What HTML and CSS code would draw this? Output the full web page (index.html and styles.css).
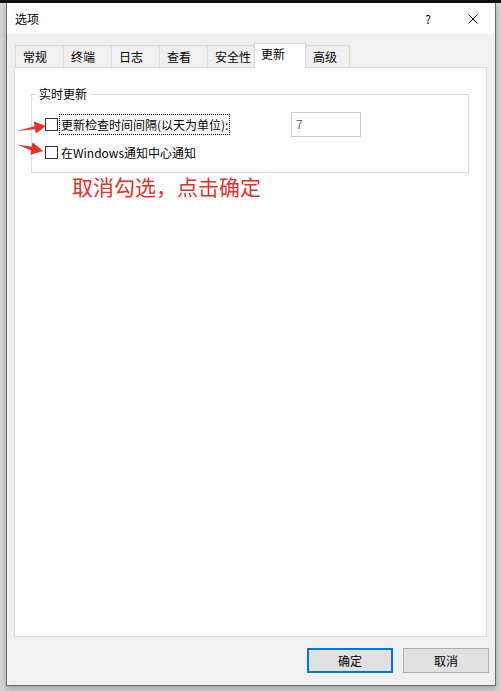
FILE: index.html
```html
<!DOCTYPE html>
<html lang="zh-CN">
<head>
    <meta charset="UTF-8">
    <title>选项</title>
    <link rel="stylesheet" href="styles.css">
</head>
<body>
    <div class="topband"></div>
    <div class="dialog">
        <div class="titlebar">
            <span class="title">选项</span>
            <span class="help">?</span>
            <span class="close">
                <svg width="10" height="10" viewBox="0 0 10 10"><path d="M0.5 0.5 L9.5 9.5 M9.5 0.5 L0.5 9.5" stroke="#000" stroke-width="1" fill="none"/></svg>
            </span>
        </div>
        <div class="body">
            <div class="tabs">
                <div class="tab t1">常规</div>
                <div class="tab t1">终端</div>
                <div class="tab t1">日志</div>
                <div class="tab t1">查看</div>
                <div class="tab t2">安全性</div>
                <div class="tab active">更新</div>
                <div class="tab t3">高级</div>
            </div>
            <div class="panel">
                <fieldset class="group">
                    <legend>实时更新</legend>
                    <div class="row row1">
                        <span class="check-wrap">
                            <span class="checkbox"></span>
                            <span class="label focused">更新检查时间间隔(以天为单位):</span>
                        </span>
                        <span class="numbox">7</span>
                    </div>
                    <div class="row row2">
                        <span class="checkbox"></span>
                        <span class="label">在Windows通知中心通知</span>
                    </div>
                </fieldset>
                <div class="note">取消勾选，点击确定</div>
            </div>
            <div class="footer">
                <button class="btn primary">确定</button>
                <button class="btn">取消</button>
            </div>
        </div>
    </div>

    <!-- red annotation arrows -->
    <svg class="arrows" width="60" height="170" viewBox="0 0 60 170">
        <polygon fill="#e8302a" points="17,131 34.5,126.2 33.8,121.5 46,126 35.8,133.4 35,129.2"/>
        <polygon fill="#e8302a" points="17,144.6 31.6,146.8 32.6,142.2 43,151 30.4,154.7 31.2,150.4"/>
    </svg>
</body>
</html>
```

FILE: styles.css
```css
* {
    margin: 0;
    padding: 0;
    box-sizing: border-box;
}

body {
    font-family: "Noto Sans CJK SC", "Microsoft YaHei", sans-serif;
    font-size: 12px;
    color: #000;
    background: #d6d6d6;
    width: 501px;
    height: 691px;
    overflow: hidden;
}

.topband {
    height: 3px;
    background: #111;
}

.dialog {
    margin-left: 6px;
    width: 490px;
    height: 683px;
    border: 1px solid #6c6c6c;
    border-top: none;
    background: #f0f0f0;
    display: flex;
    flex-direction: column;
    box-shadow: 0 3px 6px rgba(0, 0, 0, 0.25);
}

/* title bar */
.titlebar {
    height: 31px;
    background: #fff;
    display: flex;
    align-items: center;
    padding-left: 8px;
}

.title {
    flex: 1;
    line-height: 14px;
}

.help {
    width: 12px;
    text-align: center;
    margin-right: 34px;
    line-height: 14px;
}

.close {
    width: 10px;
    height: 10px;
    margin-right: 17px;
    display: flex;
}

/* body */
.body {
    flex: 1;
    display: flex;
    flex-direction: column;
    padding-top: 9px;
}

.tabs {
    display: flex;
    align-items: flex-end;
    margin-left: 8px;
    position: relative;
    z-index: 1;
}

.tab {
    height: 22px;
    border: 1px solid #d9d9d9;
    border-bottom: none;
    margin-right: -1px;
    padding-left: 7px;
    line-height: 21px;
    background: #f0f0f0;
}

.tab.t1 { width: 49px; }
.tab.t2 { width: 48px; }
.tab.t3 { width: 45px; }

.tab.active {
    width: 52px;
    height: 25px;
    margin-bottom: -1px;
    background: #fff;
    line-height: 20px;
    padding-left: 6px;
}

.panel {
    flex: 1;
    margin: 0 8px 0 7px;
    background: #fff;
    border: 1px solid #d9d9d9;
    display: flex;
    flex-direction: column;
}

/* group box */
.group {
    margin: 19px 0 0 16px;
    width: 438px;
    border: 1px solid #dcdcdc;
    padding: 0 0 10px 0;
}

.group legend {
    margin-left: 4px;
    padding: 0 3px;
    line-height: 14px;
}

.row {
    display: flex;
    align-items: center;
    padding-left: 13px;
}

.row1 {
    margin-top: 11px;
    height: 25px;
}

.row2 {
    margin-top: 5px;
    height: 20px;
}

.check-wrap {
    display: flex;
    align-items: center;
    width: 246px;
}

.checkbox {
    width: 13px;
    height: 13px;
    border: 1px solid #333;
    background: #fff;
    flex-shrink: 0;
}

.label {
    margin-left: 1px;
    padding: 0 1px;
    height: 21px;
    line-height: 19px;
    border: 1px solid transparent;
    white-space: nowrap;
}

.label.focused {
    border: 1px dotted #000;
}

.numbox {
    width: 70px;
    height: 25px;
    border: 1px solid #cccccc;
    color: #6d6d6d;
    padding-left: 4px;
    line-height: 21px;
}

.note {
    margin: 1px 0 0 57px;
    font-size: 21px;
    line-height: 24px;
    color: #e8302a;
}

/* footer buttons */
.footer {
    display: flex;
    justify-content: flex-end;
    gap: 10px;
    padding: 11px 6px 12px 0;
}

.btn {
    width: 86px;
    height: 25px;
    background: #e1e1e1;
    border: 1px solid #adadad;
    font-family: inherit;
    font-size: 12px;
    color: #000;
}

.btn.primary {
    border: 2px solid #0078d7;
}

.arrows {
    position: absolute;
    left: 0;
    top: 0;
}
```
